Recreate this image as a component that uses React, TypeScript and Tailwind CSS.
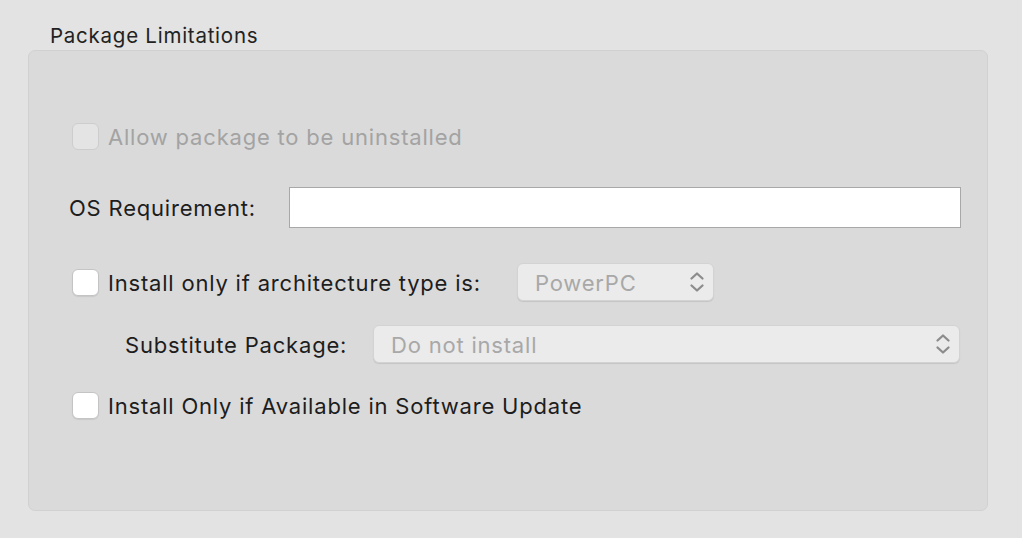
import React from "react";

function Chevrons() {
  return (
    <svg width="16" height="24" viewBox="0 0 16 24" fill="none" stroke="#8c8c8c" strokeWidth="2.3" strokeLinecap="round" strokeLinejoin="round">
      <path d="M2.5 8.5 L8 3.5 L13.5 8.5" />
      <path d="M2.5 15.5 L8 20.5 L13.5 15.5" />
    </svg>
  );
}

function Checkbox({ disabled }: { disabled?: boolean }) {
  return (
    <div
      className={
        disabled
          ? "w-[27px] h-[27px] rounded-[6px] border border-[#cdcdcd] bg-[#e4e4e4] shrink-0"
          : "w-[27px] h-[27px] rounded-[6px] border border-[#c4c4c4] bg-white shadow-[0_1px_1px_rgba(0,0,0,0.08)] shrink-0"
      }
    />
  );
}

export default function App() {
  return (
    <div
      className="w-[1022px] h-[538px] bg-[#e3e3e3] text-[#1d1d1d] overflow-hidden"
      style={{ fontFamily: "Inter, 'Noto Sans', sans-serif" }}
    >
      <div className="h-[50px] pl-[50px] pt-[23px] text-[20.5px] leading-[26px] tracking-[0.75px] text-[#222]">Package Limitations</div>
      <div className="ml-[28px] w-[960px] h-[461px] rounded-[7px] border border-[#d1d1d1] bg-[#dadada] flex flex-col text-[22px] tracking-[0.8px]">
        {/* row 1 */}
        <div className="mt-[72px] ml-[43px] h-[27px] flex items-center">
          <Checkbox disabled />
          <span className="ml-[9px] pt-[1px] text-[#a3a3a3]">Allow package to be uninstalled</span>
        </div>
        {/* row 2 */}
        <div className="mt-[37px] ml-[40px] h-[41px] flex items-center">
          <span className="w-[220px] shrink-0 pt-[1px] text-[#1d1d1d]">OS Requirement:</span>
          <div className="w-[672px] h-[41px] bg-white border border-[#a8a8a8]" />
        </div>
        {/* row 3 */}
        <div className="mt-[35px] ml-[43px] h-[38px] flex items-center">
          <Checkbox />
          <span className="ml-[9px] w-[409px] shrink-0 pt-[2px] text-[#1d1d1d]">Install only if architecture type is:</span>
          <div className="w-[197px] h-[38px] rounded-[6px] bg-[#ebebeb] border border-[#d3d3d3] shadow-[0_1px_1px_rgba(0,0,0,0.1)] flex items-center pl-[17px] pr-[8px]">
            <span className="flex-1 pt-[2px] text-[#a8a8a8]">PowerPC</span>
            <Chevrons />
          </div>
        </div>
        {/* row 4 */}
        <div className="mt-[24px] ml-[96px] h-[38px] flex items-center">
          <span className="w-[248px] shrink-0 pt-[2px] text-[#1d1d1d]">Substitute Package:</span>
          <div className="w-[587px] h-[38px] rounded-[6px] bg-[#ebebeb] border border-[#d3d3d3] shadow-[0_1px_1px_rgba(0,0,0,0.1)] flex items-center pl-[17px] pr-[8px]">
            <span className="flex-1 pt-[2px] text-[#a8a8a8]">Do not install</span>
            <Chevrons />
          </div>
        </div>
        {/* row 5 */}
        <div className="mt-[29px] ml-[43px] h-[27px] flex items-center">
          <Checkbox />
          <span className="ml-[9px] pt-[1px] text-[#1d1d1d]">Install Only if Available in Software Update</span>
        </div>
      </div>
    </div>
  );
}
